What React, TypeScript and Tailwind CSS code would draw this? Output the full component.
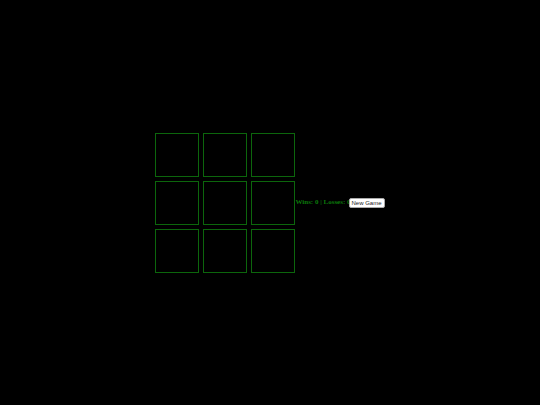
export default function App() {
  const cells = Array.from({ length: 9 });
  return (
    <div className="flex h-[405px] w-full items-center justify-center bg-black">
      <div className="grid grid-cols-[44px_44px_44px] gap-[4px]">
        {cells.map((_, i) => (
          <div key={i} className="h-[44px] w-[44px] border border-[#0c660c]" />
        ))}
      </div>
      <span className="whitespace-nowrap text-[7px] font-bold text-[#0b7a0b]" style={{ fontFamily: '"Liberation Serif", serif' }}>
        Wins: 0 | Losses: 0
      </span>
      <button
        className="relative -ml-[2px] rounded-[2px] border border-[#aaa] bg-white px-[2px] py-0 text-[6px] leading-[8px] text-[#222]"
        style={{ fontFamily: '"Liberation Sans", sans-serif' }}
      >
        New Game
      </button>
    </div>
  );
}
